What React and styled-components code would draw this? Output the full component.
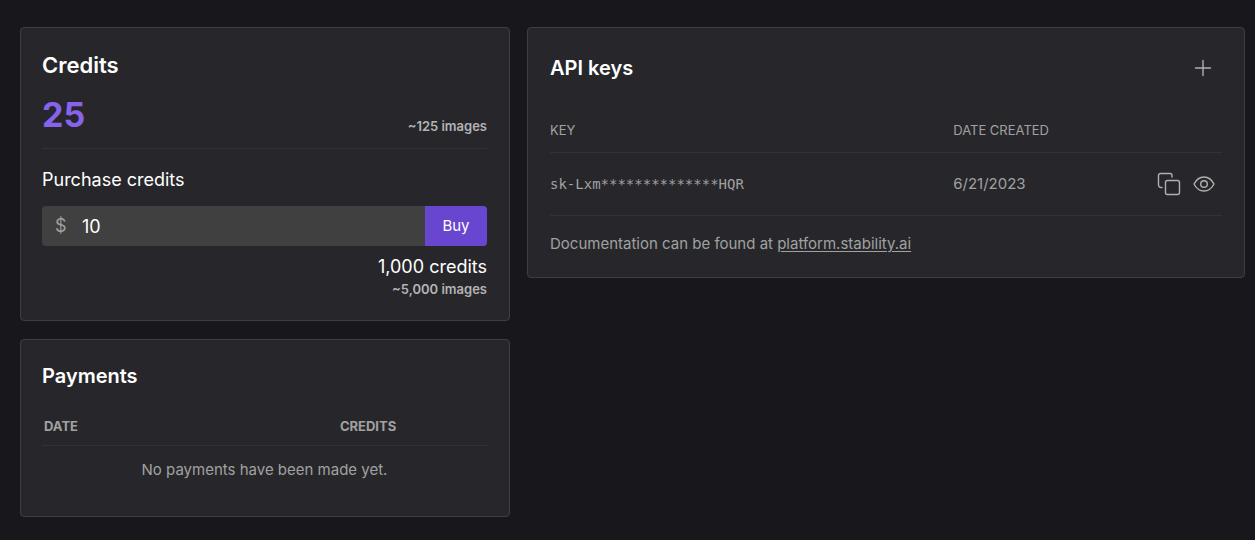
import React, { useState } from "react";
import styled, { createGlobalStyle } from "styled-components";

const GlobalStyle = createGlobalStyle`
  *, *::before, *::after { box-sizing: border-box; }
  body {
    margin: 0;
    background: #18171c;
    color: #a1a1a1;
    font-family: Inter, "Liberation Sans", sans-serif;
    font-size: 15px;
    line-height: 24px;
  }
`;

const Page = styled.main`
  display: flex;
  align-items: flex-start;
  gap: 17px;
  padding: 27px 10px 20px 20px;
`;

const Column = styled.div`
  display: flex;
  flex-direction: column;
  gap: 18px;
  min-width: 0;
  flex: ${(p) => (p.$wide ? "1 1 0" : "0 0 40%")};
`;

const Card = styled.section`
  padding: 21px 22px 21px ${(p) => (p.$wide ? "22px" : "21px")};
  background: #27272b;
  border: 1px solid #3e3e42;
  border-radius: 4px;
`;

const Title = styled.h2`
  margin: 0;
  color: #fff;
  font-size: ${(p) => (p.$large ? "22px" : "20px")};
  line-height: ${(p) => (p.$large ? "32px" : "30px")};
  font-weight: 600;
`;

const Balance = styled.div`
  display: flex;
  align-items: flex-end;
  justify-content: space-between;
  margin-top: 13px;
  padding-bottom: 12px;
  border-bottom: 1px solid #323236;
`;

const Amount = styled.strong`
  color: #8763ec;
  font-size: 34px;
  line-height: 42px;
  font-weight: 700;
`;

const Estimate = styled.span`
  color: #b4b4b4;
  font-size: 13px;
  line-height: 20px;
  font-weight: 600;
`;

const PurchaseForm = styled.form`
  display: flex;
  flex-direction: column;
  margin-top: 19px;
`;

const FieldLabel = styled.label`
  color: #fff;
  font-size: 18px;
  line-height: 24px;
`;

const Field = styled.div`
  display: flex;
  align-items: center;
  height: 40px;
  margin: 14px 0 9px;
  overflow: hidden;
  background: #404040;
  border-radius: 4px;
`;

const Currency = styled.span`
  width: 40px;
  padding-left: 13px;
  font-size: 18px;
`;

const AmountInput = styled.input`
  flex: 1;
  min-width: 0;
  height: 100%;
  padding: 0;
  border: 0;
  outline: 0;
  background: transparent;
  color: #fff;
  font: inherit;
  font-size: 18px;
`;

const BuyButton = styled.button`
  width: 62px;
  height: 100%;
  padding: 0;
  border: 0;
  background: #6846d0;
  color: #fff;
  font: inherit;
  cursor: pointer;
`;

const Summary = styled.div`
  display: flex;
  flex-direction: column;
  align-items: flex-end;
`;

const Total = styled.span`
  color: #fff;
  font-size: 18px;
  line-height: 24px;
`;

const Table = styled.table`
  width: 100%;
  margin-top: ${(p) => (p.$wide ? "33px" : "25px")};
  table-layout: fixed;
  border-collapse: collapse;
`;

const HeadCell = styled.th`
  width: ${(p) => p.$width};
  padding: ${(p) => (p.$strong ? "0 0 9px 2px" : "0 0 12px")};
  border-bottom: 1px solid #323236;
  font-size: 13px;
  line-height: 20px;
  font-weight: ${(p) => (p.$strong ? 700 : 400)};
  text-align: left;
`;

const Cell = styled.td`
  height: 63px;
  padding: 0;
  border-bottom: 1px solid #323236;
`;

const EmptyCell = styled.td`
  padding: 12px 0 13px;
  text-align: center;
`;

const Key = styled.code`
  font-family: "DejaVu Sans Mono", "Liberation Mono", monospace;
  font-size: 14px;
`;

const CardHeader = styled.header`
  display: flex;
  align-items: center;
  justify-content: space-between;
`;

const IconButton = styled.button`
  display: flex;
  align-items: center;
  justify-content: center;
  width: ${(p) => (p.$large ? "38px" : "35px")};
  height: 38px;
  padding: 0;
  border: 0;
  background: transparent;
  color: #b0b0b2;
  cursor: pointer;
`;

const Actions = styled.div`
  display: flex;
  justify-content: flex-end;
  padding-right: 1px;
`;

const Note = styled.p`
  margin: 16px 0 0;
`;

const Link = styled.a`
  color: inherit;
  text-underline-offset: 2px;
`;

const Svg = styled.svg`
  width: 24px;
  height: 24px;
  fill: none;
  stroke: currentColor;
  stroke-width: 1.4;
  stroke-linecap: round;
  stroke-linejoin: round;
`;

const PlusIcon = () => (
  <Svg viewBox="0 0 24 24" aria-hidden="true">
    <path d="M12 4.5v15M4.5 12h15" />
  </Svg>
);

const CopyIcon = () => (
  <Svg viewBox="0 0 24 24" aria-hidden="true">
    <rect x="8.5" y="8.5" width="14" height="14" rx="2" />
    <path d="M5 15.5H4a2.500 2.500 0 0 1-2.500-2.500V3.500a2 2 0 0 1 2-2H13a2 2 0 0 1 2 2V5" />
  </Svg>
);

const EyeIcon = () => (
  <Svg viewBox="0 0 24 24" aria-hidden="true">
    <path d="M2 12c2.400-4.600 5.800-7 10-7s7.600 2.400 10 7c-2.400 4.600-5.800 7-10 7s-7.600-2.400-10-7z" />
    <circle cx="12" cy="12" r="3.300" />
  </Svg>
);

export default function App() {
  const [amount, setAmount] = useState("10");
  const credits = (Number(amount) || 0) * 100;

  return (
    <>
      <GlobalStyle />
      <Page>
        <Column>
          <Card>
            <Title $large>Credits</Title>
            <Balance>
              <Amount>25</Amount>
              <Estimate>~125 images</Estimate>
            </Balance>
            <PurchaseForm onSubmit={(e) => e.preventDefault()}>
              <FieldLabel htmlFor="amount">Purchase credits</FieldLabel>
              <Field>
                <Currency>$</Currency>
                <AmountInput
                  id="amount"
                  inputMode="numeric"
                  value={amount}
                  onChange={(e) => setAmount(e.target.value)}
                />
                <BuyButton type="submit">Buy</BuyButton>
              </Field>
              <Summary>
                <Total>{credits.toLocaleString("en-US")} credits</Total>
                <Estimate>~{(credits * 5).toLocaleString("en-US")} images</Estimate>
              </Summary>
            </PurchaseForm>
          </Card>
          <Card>
            <Title>Payments</Title>
            <Table>
              <thead>
                <tr>
                  <HeadCell $strong $width="66.5%">DATE</HeadCell>
                  <HeadCell $strong>CREDITS</HeadCell>
                </tr>
              </thead>
              <tbody>
                <tr>
                  <EmptyCell colSpan={2}>No payments have been made yet.</EmptyCell>
                </tr>
              </tbody>
            </Table>
          </Card>
        </Column>
        <Column $wide>
          <Card $wide>
            <CardHeader>
              <Title>API keys</Title>
              <IconButton $large type="button" aria-label="Create API key">
                <PlusIcon />
              </IconButton>
            </CardHeader>
            <Table $wide>
              <thead>
                <tr>
                  <HeadCell $width="60%">KEY</HeadCell>
                  <HeadCell $width="25%">DATE CREATED</HeadCell>
                  <HeadCell aria-label="Actions" />
                </tr>
              </thead>
              <tbody>
                <tr>
                  <Cell><Key>sk-Lxm**************HQR</Key></Cell>
                  <Cell>6/21/2023</Cell>
                  <Cell>
                    <Actions>
                      <IconButton type="button" aria-label="Copy key">
                        <CopyIcon />
                      </IconButton>
                      <IconButton type="button" aria-label="Show key">
                        <EyeIcon />
                      </IconButton>
                    </Actions>
                  </Cell>
                </tr>
              </tbody>
            </Table>
            <Note>
              Documentation can be found at <Link href="#docs">platform.stability.ai</Link>
            </Note>
          </Card>
        </Column>
      </Page>
    </>
  );
}
